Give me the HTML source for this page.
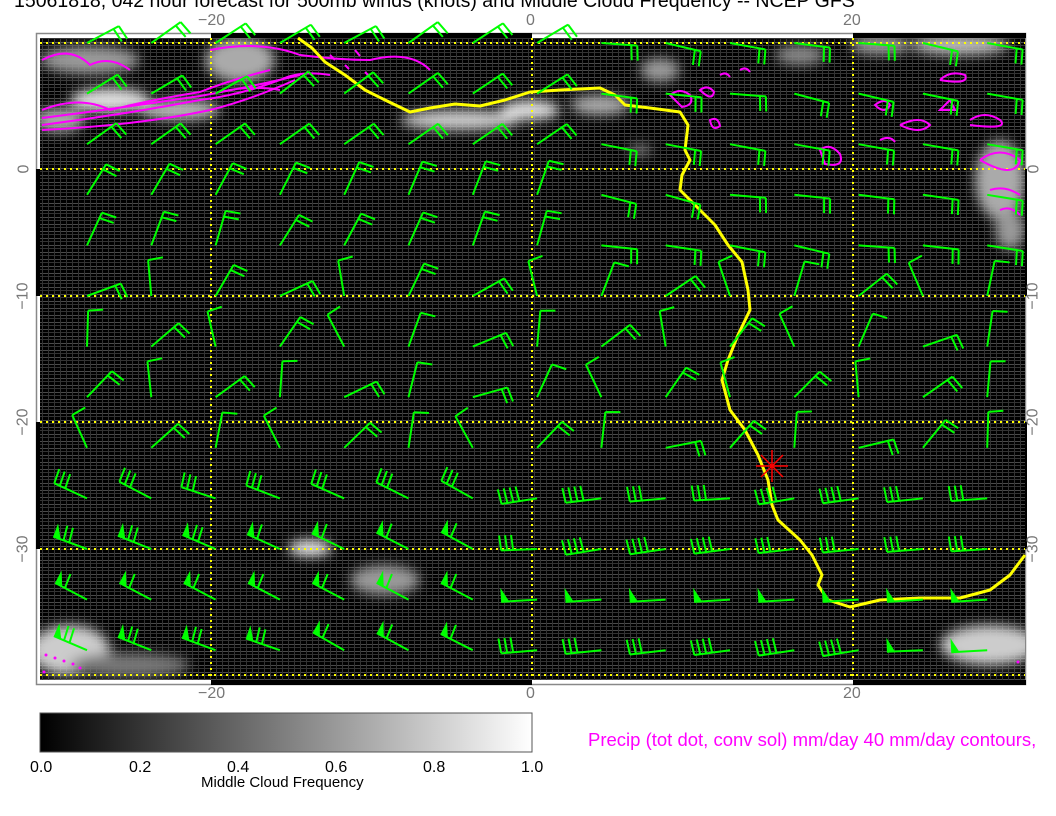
<!DOCTYPE html>
<html><head><meta charset="utf-8"><style>
html,body{margin:0;padding:0;background:#fff;width:1056px;height:816px;overflow:hidden;font-family:"Liberation Sans",sans-serif;}
.t{position:absolute;white-space:nowrap;}
</style></head><body>
<div class="t" style="left:14px;top:-10px;font-size:19.5px;color:#000;">15061818, 042 hour forecast for 500mb winds (knots) and Middle Cloud Frequency -- NCEP GFS</div>
<svg width="1056" height="816" style="position:absolute;left:0;top:0" xmlns="http://www.w3.org/2000/svg">
<defs>
<filter id="bl" x="-50%" y="-50%" width="200%" height="200%"><feGaussianBlur stdDeviation="6"/></filter>
<pattern id="grid" width="6" height="7" patternUnits="userSpaceOnUse">
<rect width="6" height="7" fill="#000"/>
<line x1="0" y1="0.5" x2="6" y2="0.5" stroke="#4a4a4a" stroke-width="1"/>
<line x1="0" y1="3.5" x2="6" y2="3.5" stroke="#333" stroke-width="1"/>
<line x1="0.5" y1="0" x2="0.5" y2="7" stroke="#333" stroke-width="1"/>
</pattern>
<linearGradient id="cb" x1="0" x2="1" y1="0" y2="0"><stop offset="0" stop-color="#000"/><stop offset="1" stop-color="#fff"/></linearGradient>
<clipPath id="mc"><rect x="40" y="38" width="985" height="642"/></clipPath>
</defs>
<rect x="36.5" y="33.5" width="989" height="651" fill="none" stroke="#888" stroke-width="1.5"/>
<rect x="211" y="33" width="321" height="5" fill="#000"/>
<rect x="853" y="33" width="173" height="5" fill="#000"/>
<rect x="211" y="680" width="321" height="5" fill="#000"/>
<rect x="853" y="680" width="173" height="5" fill="#000"/>
<rect x="36" y="169" width="5" height="127" fill="#000"/>
<rect x="36" y="422" width="5" height="127" fill="#000"/>
<rect x="1022" y="169" width="5" height="127" fill="#000"/>
<rect x="1022" y="422" width="5" height="127" fill="#000"/>
<rect x="40" y="38" width="985" height="642" fill="url(#grid)"/>
<g clip-path="url(#mc)" filter="url(#bl)" fill="#ccc">
<ellipse cx="90" cy="60" rx="50" ry="14" fill="#999"/>
<ellipse cx="110" cy="100" rx="40" ry="12" fill="#ddd"/>
<ellipse cx="60" cy="120" rx="25" ry="12" fill="#aaa"/>
<ellipse cx="180" cy="110" rx="40" ry="10" fill="#bbb"/>
<ellipse cx="240" cy="60" rx="35" ry="22" fill="#aaa"/>
<ellipse cx="460" cy="120" rx="60" ry="10" fill="#ccc"/>
<ellipse cx="530" cy="110" rx="30" ry="10" fill="#ddd"/>
<ellipse cx="600" cy="105" rx="30" ry="10" fill="#aaa"/>
<ellipse cx="660" cy="70" rx="20" ry="12" fill="#999"/>
<ellipse cx="800" cy="55" rx="25" ry="10" fill="#888"/>
<ellipse cx="880" cy="45" rx="30" ry="10" fill="#999"/>
<ellipse cx="960" cy="45" rx="50" ry="10" fill="#bbb"/>
<ellipse cx="1000" cy="180" rx="25" ry="40" fill="#aaa"/>
<ellipse cx="640" cy="150" rx="12" ry="6" fill="#777"/>
<ellipse cx="310" cy="548" rx="22" ry="8" fill="#eee"/>
<ellipse cx="385" cy="580" rx="35" ry="15" fill="#999"/>
<ellipse cx="70" cy="650" rx="40" ry="25" fill="#ccc"/>
<ellipse cx="130" cy="665" rx="60" ry="12" fill="#777"/>
<ellipse cx="990" cy="645" rx="50" ry="20" fill="#ccc"/>
<ellipse cx="1010" cy="230" rx="15" ry="20" fill="#999"/>
</g>
<g stroke="#ff0" stroke-width="2" stroke-dasharray="2 4">
<line x1="40" y1="43" x2="1025" y2="43"/><line x1="40" y1="169" x2="1025" y2="169"/>
<line x1="40" y1="296" x2="1025" y2="296"/><line x1="40" y1="422" x2="1025" y2="422"/>
<line x1="40" y1="549" x2="1025" y2="549"/><line x1="40" y1="675" x2="1025" y2="675"/>
<line x1="211" y1="38" x2="211" y2="680"/><line x1="532" y1="38" x2="532" y2="680"/><line x1="853" y1="38" x2="853" y2="680"/>
</g>
<g clip-path="url(#mc)" fill="none" stroke="#f0f" stroke-width="2">
<path d="M42 60 Q70 45 90 65 Q110 55 130 70 M42 125 Q120 115 200 100 Q240 95 280 80 Q300 70 330 75 M42 118 Q120 108 200 96 Q260 85 300 75 M42 130 Q140 125 210 110 Q250 100 295 80 M42 110 Q80 95 110 110 Q150 100 200 92 Q230 80 270 70 M210 50 Q260 40 300 55 Q340 60 370 60 Q410 50 430 70 M220 92 Q250 85 280 90"/>
<path d="M330 55 l5 5 M345 65 l4 4 M355 50 l5 6 M365 72 l4 4"/>
<path d="M670 95 q10 -8 20 0 q5 10 -8 12 z M700 90 q8 -6 14 2 q-2 10 -14 -2 z M710 120 q8 -4 10 6 q-8 6 -10 -6 z M720 75 q6 -4 10 2 M740 70 q6 -4 10 2"/>
<path d="M820 150 q10 -8 20 4 q5 14 -15 10 z M875 105 q10 -8 15 0 q-5 10 -15 0 z M900 125 q20 -10 30 0 q-10 10 -30 0 M940 80 q10 -10 25 -5 q5 10 -25 5 M970 120 q15 -10 30 0 q10 10 -30 5 M980 160 q20 -15 40 0 q-5 20 -40 0 M990 190 q15 -5 30 5 M1000 210 q10 -5 20 5 M880 140 q10 -5 15 2 M950 100 l-10 10 l15 0 z"/>
</g>
<g fill="#f0f" clip-path="url(#mc)">
<circle cx="46" cy="655" r="1.5"/><circle cx="55" cy="658" r="1.5"/><circle cx="64" cy="661" r="1.5"/><circle cx="73" cy="664" r="1.5"/><circle cx="80" cy="668" r="1.5"/><circle cx="44" cy="672" r="1.5"/><circle cx="1018" cy="662" r="1.5"/>
</g>
<path d="M298 38 L312 48 L325 62 L345 75 L365 90 L385 100 L410 112 L430 108 L455 104 L480 106 L505 100 L530 92 L560 90 L600 88 L615 95 L625 105 L650 108 L680 112 L688 125 L685 150 L690 160 L682 175 L680 190 L695 205 L715 225 L728 245 L742 262 L748 290 L750 310 L738 335 L728 360 L722 380 L730 410 L745 430 L758 455 L768 480 L772 505 L778 520 L800 540 L812 555 L822 575 L818 585 L828 600 L850 607 L880 600 L920 598 L960 598 L990 590 L1010 575 L1025 555" fill="none" stroke="#ff0" stroke-width="3" stroke-linejoin="round"/>
<g id="barbs" stroke="#0f0" stroke-width="2" fill="#0f0" stroke-linecap="butt"></g>
<g stroke="#f00" stroke-width="1.5" transform="translate(772,466)">
<line x1="-16" y1="0" x2="16" y2="0"/><line x1="0" y1="-16" x2="0" y2="16"/>
<line x1="-11" y1="-11" x2="11" y2="11"/><line x1="-11" y1="11" x2="11" y2="-11"/>
</g>
<rect x="40" y="713" width="492" height="39" fill="url(#cb)" stroke="#555" stroke-width="1"/>
</svg>
<div class="t" style="left:198px;top:12px;font-size:16px;color:#777;">−20</div>
<div class="t" style="left:526px;top:12px;font-size:16px;color:#777;">0</div>
<div class="t" style="left:843px;top:12px;font-size:16px;color:#777;">20</div>
<div class="t" style="left:198px;top:685px;font-size:16px;color:#777;">−20</div>
<div class="t" style="left:526px;top:685px;font-size:16px;color:#777;">0</div>
<div class="t" style="left:843px;top:685px;font-size:16px;color:#777;">20</div>
<div class="t" style="left:20px;top:160px;font-size:16px;color:#777;transform:rotate(-90deg);">0</div>
<div class="t" style="left:10px;top:287px;font-size:16px;color:#777;transform:rotate(-90deg);">−10</div>
<div class="t" style="left:10px;top:413px;font-size:16px;color:#777;transform:rotate(-90deg);">−20</div>
<div class="t" style="left:10px;top:540px;font-size:16px;color:#777;transform:rotate(-90deg);">−30</div>
<div class="t" style="left:1030px;top:160px;font-size:16px;color:#777;transform:rotate(-90deg);">0</div>
<div class="t" style="left:1020px;top:287px;font-size:16px;color:#777;transform:rotate(-90deg);">−10</div>
<div class="t" style="left:1020px;top:413px;font-size:16px;color:#777;transform:rotate(-90deg);">−20</div>
<div class="t" style="left:1020px;top:540px;font-size:16px;color:#777;transform:rotate(-90deg);">−30</div>
<div class="t" style="left:30px;top:759px;font-size:16px;">0.0</div>
<div class="t" style="left:129px;top:759px;font-size:16px;">0.2</div>
<div class="t" style="left:227px;top:759px;font-size:16px;">0.4</div>
<div class="t" style="left:325px;top:759px;font-size:16px;">0.6</div>
<div class="t" style="left:423px;top:759px;font-size:16px;">0.8</div>
<div class="t" style="left:521px;top:759px;font-size:16px;">1.0</div>
<div class="t" style="left:201px;top:774px;font-size:15px;">Middle Cloud Frequency</div>
<div class="t" style="left:588px;top:729px;font-size:18.5px;color:#f0f;">Precip (tot dot, conv sol) mm/day 40 mm/day contours,</div>
<script>
(function(){
var g=document.getElementById('barbs'),s='';
function h(i,j){return ((i*73+j*37+i*j*11)%97)/97;}
for(var j=0;j<13;j++){for(var i=0;i<15;i++){
 var x=87+64.3*i,y=43+50.6*j,th,nb=2,fl=0,r=h(i,j);
 if(j<=4){ if(x>560){th=4+r*12;nb=2;} else if(j<=2){th=-28-r*10;} else {th=-55-r*20;} }
 else if(j<=8){ th=-120+r*110; nb=1+(r>0.5?1:0); }
 else { if(x<480){th=-150-r*12; if(j>=10){fl=1;nb=1+(r>0.5?1:0);} else nb=3;} else {th=178-r*8;nb=3+(r>0.6?1:0); if(j>=11&&r<0.3){fl=1;nb=0;}} }
 var L=36,d='M0 0 L'+L+' 0',p='',pos=L;
 if(fl){p='<path d="M'+L+' 0 L'+L+' 14 L'+(L-8)+' 0 Z" stroke="none"/>';pos=L-11;}
 for(var k=0;k<nb;k++){var xx=pos-k*6;d+=' M'+xx+' 0 L'+(xx+1.5)+' 15';}
 s+='<g transform="translate('+x.toFixed(1)+','+y.toFixed(1)+') rotate('+th.toFixed(1)+')"><path d="'+d+'" fill="none"/>'+p+'</g>';
}}
g.innerHTML=s;
})();
</script>
</body></html>
